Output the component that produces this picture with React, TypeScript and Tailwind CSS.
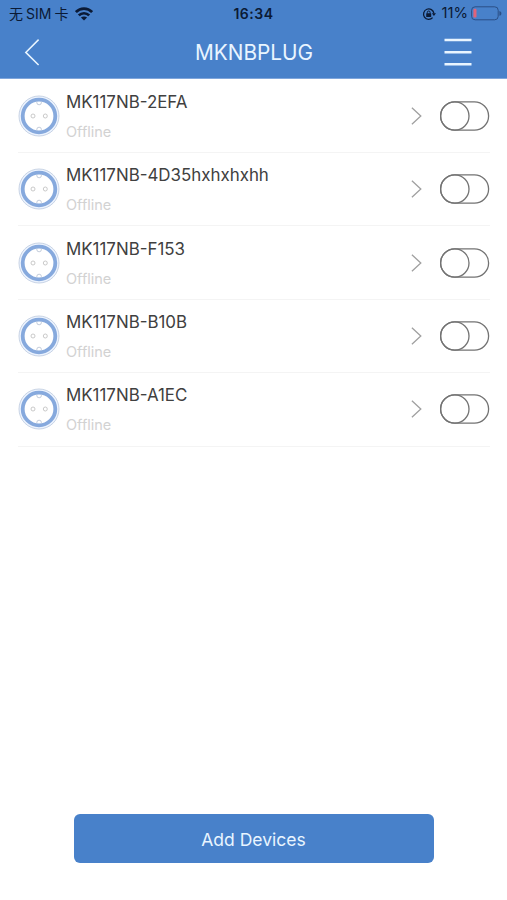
import { useState } from "react";

type Device = {
  name: string;
  online: boolean;
};

const devices: Device[] = [
  { name: "MK117NB-2EFA", online: false },
  { name: "MK117NB-4D35hxhxhxhh", online: false },
  { name: "MK117NB-F153", online: false },
  { name: "MK117NB-B10B", online: false },
  { name: "MK117NB-A1EC", online: false },
];

function WifiIcon() {
  return (
    <svg width="18" height="14" viewBox="0 0 18 14" fill="none" stroke="#0b1a35" strokeWidth="2.7">
      <path d="M0.9 5.1C5.4 0.5 12.6 0.5 17.1 5.1" />
      <path d="M3.8 8.4C6.7 5.5 11.3 5.5 14.2 8.4" />
      <path d="M9 13.6L5.9 10.6C7.6 9 10.4 9 12.1 10.6Z" fill="#0b1a35" stroke="none" />
    </svg>
  );
}

function RotationLockIcon() {
  return (
    <svg width="14" height="14" viewBox="0 0 14 14" fill="none" stroke="#0b1a35">
      <path d="M10.6 10.6A5.2 5.2 0 1 1 11.9 6.4" strokeWidth="1.3" />
      <path d="M9.9 6.2H14L11.9 9Z" fill="#0b1a35" stroke="none" />
      <rect x="4.2" y="6.3" width="5" height="3.7" rx="0.5" fill="#0b1a35" stroke="none" />
      <path d="M5.3 6.5V5.4A1.4 1.4 0 0 1 8.1 5.4V6.5" strokeWidth="1" />
    </svg>
  );
}

function BatteryIcon() {
  return (
    <svg width="31" height="15" viewBox="0 0 31 15" fill="none">
      <rect x="0.6" y="0.8" width="26.6" height="13" rx="3.5" stroke="#2b4f86" strokeWidth="1" />
      <rect x="2.4" y="2.8" width="3.1" height="8.8" rx="1.2" fill="#e0637a" />
      <path d="M28.4 5V9.8C29.8 9.3 30.4 8.5 30.4 7.4S29.8 5.5 28.4 5Z" fill="#2b4f86" />
    </svg>
  );
}

function PlugIcon() {
  return (
    <svg width="42" height="42" viewBox="0 0 42 42" fill="none">
      <circle cx="21" cy="21" r="20" stroke="#c3cfe2" strokeWidth="0.9" fill="#ecf3fe" />
      <circle cx="21" cy="21" r="16.3" stroke="#86a9dd" strokeWidth="3.8" fill="#ffffff" />
      <circle cx="15" cy="21" r="2" stroke="#bdbdbd" strokeWidth="0.8" />
      <circle cx="27.3" cy="21" r="2" stroke="#bdbdbd" strokeWidth="0.8" />
      <path d="M18.8 6.6V7.5A2.3 2.3 0 0 0 23.4 7.5V6.6" stroke="#b4bfd0" strokeWidth="0.8" />
      <path d="M18.8 35.4V34.5A2.3 2.3 0 0 1 23.4 34.5V35.4" stroke="#b4bfd0" strokeWidth="0.8" />
    </svg>
  );
}

function Toggle({ on, onToggle }: { on: boolean; onToggle: () => void }) {
  return (
    <button type="button" role="switch" aria-checked={on} onClick={onToggle} className="cursor-pointer">
      <svg width="50" height="32" viewBox="0 0 50 32" fill="none" stroke="#737373" strokeWidth="1.3">
        <rect x="0.6" y="1.8" width="48" height="28.4" rx="14.2" />
        <circle cx={on ? 34.4 : 14.8} cy="16" r="14.2" />
      </svg>
    </button>
  );
}

function DeviceRow({ device }: { device: Device }) {
  const [on, setOn] = useState(false);

  return (
    <li className="flex h-[73.4px] items-center border-b border-[#f4f4f4]">
      <PlugIcon />
      <div className="ml-[6px] flex-1 pt-[2px]">
        <div className="text-[16.9px] leading-5 text-[#404040]">{device.name}</div>
        <div className="mt-2.5 text-[14.5px] leading-5 text-[#d2d2d2]">
          {device.online ? "Online" : "Offline"}
        </div>
      </div>
      <svg width="12" height="18" viewBox="0 0 12 18" fill="none" stroke="#a0a0a0" strokeWidth="1.3">
        <path d="M0.9 0.8L9.8 9L0.9 17.2" />
      </svg>
      <div className="ml-[17px] flex">
        <Toggle on={on} onToggle={() => setOn(!on)} />
      </div>
    </li>
  );
}

export default function App() {
  return (
    <div className="flex h-[900px] w-[507px] flex-col overflow-hidden bg-white font-['Inter','Noto_Sans_CJK_SC',sans-serif]">
      <header className="h-[79px] shrink-0 border-b border-[#7fa6dc] bg-[#4881ca]">
        {/* status bar */}
        <div className="grid h-[27px] grid-cols-3 items-center text-[14px] text-[#0b1a35]">
          <div className="flex items-center gap-[7px] pl-[9px]">
            <span className="flex whitespace-nowrap">
              无<span className="mr-[3px] ml-[3px]">SIM</span>卡
            </span>
            <WifiIcon />
          </div>
          <div className="text-center text-[14px] font-semibold tracking-[0.5px]">16:34</div>
          <div className="flex items-center justify-end pr-[5px]">
            <RotationLockIcon />
            <span className="mr-[3px] ml-[5px] text-[14.8px]">11%</span>
            <BatteryIcon />
          </div>
        </div>

        {/* navigation bar */}
        <div className="flex h-[50px] items-center justify-between pr-[35px] pl-[24px] text-[#e9f5ff]">
          <button type="button" aria-label="Back" className="w-7 cursor-pointer">
            <svg width="16" height="28" viewBox="0 0 16 28" fill="none" stroke="currentColor" strokeWidth="1.5">
              <path d="M14.6 1.6L1.8 14.4L14.6 27" />
            </svg>
          </button>
          <h1 className="ml-[12px] pt-[2px] text-[20.8px]">MKNBPLUG</h1>
          <button type="button" aria-label="Menu" className="cursor-pointer">
            <svg width="28" height="28" viewBox="0 0 28 28" stroke="currentColor" strokeWidth="2.4">
              <path d="M0.5 2H27.5M0.5 14.2H27.5M0.5 26.3H27.5" />
            </svg>
          </button>
        </div>
      </header>

      <main className="flex-1 pt-[0.6px] pr-[17px] pl-[18px]">
        <ul>
          {devices.map((d) => (
            <DeviceRow key={d.name} device={d} />
          ))}
        </ul>
      </main>

      <footer className="flex justify-center pb-[37px]">
        <button
          type="button"
          className="h-[49px] w-[360px] cursor-pointer rounded-md bg-[#4881ca] pt-[3px] text-[17.5px] text-[#e9f5ff]"
        >
          Add Devices
        </button>
      </footer>
    </div>
  );
}
